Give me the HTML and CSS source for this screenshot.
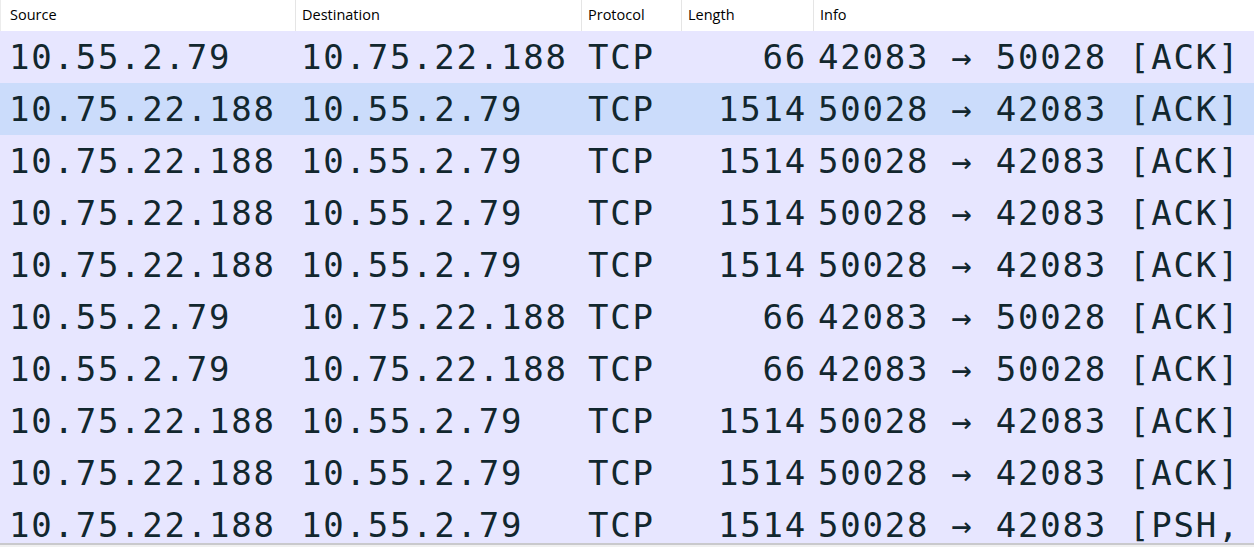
FILE: index.html
```html
<!DOCTYPE html>
<html>
<head>
<meta charset="utf-8">
<link rel="stylesheet" href="styles.css">
</head>
<body>
<div class="pane">
  <div class="head">
    <div class="hcell first">Source</div>
    <div class="hcell">Destination</div>
    <div class="hcell">Protocol</div>
    <div class="hcell">Length</div>
    <div class="hcell">Info</div>
  </div>
  <div class="rows">
    <div class="row"><span class="c src">10.55.2.79</span><span class="c dst">10.75.22.188</span><span class="c proto">TCP</span><span class="c len">66</span><span class="c info">42083 → 50028 [ACK]</span></div>
    <div class="row sel"><span class="c src">10.75.22.188</span><span class="c dst">10.55.2.79</span><span class="c proto">TCP</span><span class="c len">1514</span><span class="c info">50028 → 42083 [ACK]</span></div>
    <div class="row"><span class="c src">10.75.22.188</span><span class="c dst">10.55.2.79</span><span class="c proto">TCP</span><span class="c len">1514</span><span class="c info">50028 → 42083 [ACK]</span></div>
    <div class="row"><span class="c src">10.75.22.188</span><span class="c dst">10.55.2.79</span><span class="c proto">TCP</span><span class="c len">1514</span><span class="c info">50028 → 42083 [ACK]</span></div>
    <div class="row"><span class="c src">10.75.22.188</span><span class="c dst">10.55.2.79</span><span class="c proto">TCP</span><span class="c len">1514</span><span class="c info">50028 → 42083 [ACK]</span></div>
    <div class="row"><span class="c src">10.55.2.79</span><span class="c dst">10.75.22.188</span><span class="c proto">TCP</span><span class="c len">66</span><span class="c info">42083 → 50028 [ACK]</span></div>
    <div class="row"><span class="c src">10.55.2.79</span><span class="c dst">10.75.22.188</span><span class="c proto">TCP</span><span class="c len">66</span><span class="c info">42083 → 50028 [ACK]</span></div>
    <div class="row"><span class="c src">10.75.22.188</span><span class="c dst">10.55.2.79</span><span class="c proto">TCP</span><span class="c len">1514</span><span class="c info">50028 → 42083 [ACK]</span></div>
    <div class="row"><span class="c src">10.75.22.188</span><span class="c dst">10.55.2.79</span><span class="c proto">TCP</span><span class="c len">1514</span><span class="c info">50028 → 42083 [ACK]</span></div>
    <div class="row"><span class="c src">10.75.22.188</span><span class="c dst">10.55.2.79</span><span class="c proto">TCP</span><span class="c len">1514</span><span class="c info">50028 → 42083 [PSH, ACK] Seq=1 Ack=1</span></div>
  </div>
  <div class="foot"></div>
</div>
</body>
</html>
```

FILE: styles.css
```css
html, body {
  margin: 0;
  padding: 0;
  overflow: hidden;
  background: #ffffff;
}

.pane {
  width: 1254px;
  height: 547px;
  display: flex;
  flex-direction: column;
  overflow: hidden;
}

.head {
  display: grid;
  grid-template-columns: 295px 286px 100px 132px 1fr;
  height: 31px;
  flex: none;
  background: #ffffff;
  font-family: "Open Sans", "Noto Sans", sans-serif;
  font-size: 14.5px;
  color: #000000;
}

.hcell {
  border-left: 1px solid #e5e5e5;
  padding-left: 6px;
  display: flex;
  align-items: center;
  padding-bottom: 3px;
  white-space: nowrap;
}

.hcell.first {
  border-left: 1px solid #ececec;
  padding-left: 9px;
}

.rows {
  height: 512px;
  flex: none;
  overflow: hidden;
  background: #e7e6ff;
}

.row {
  display: grid;
  grid-template-columns: 295px 286px 100px 132px 1fr;
  height: 52px;
  align-items: center;
  background: #e7e6ff;
  color: #12272e;
  font-family: "DejaVu Sans Mono", "Liberation Mono", monospace;
  font-size: 34px;
  letter-spacing: 1.75px;
  white-space: nowrap;
}

.row.sel {
  background: #cbdcfb;
}

.c {
  overflow: hidden;
  display: block;
  line-height: 52px;
  padding-bottom: 8px;
}

.src {
  padding-left: 9px;
}

.dst {
  padding-left: 6px;
}

.proto {
  padding-left: 7px;
}

.len {
  text-align: right;
  padding-right: 6px;
}

.info {
  padding-left: 5px;
  overflow: visible;
}

.foot {
  flex: none;
  height: 4px;
  border-top: 2px solid #c9c9cc;
  background: #f0f0f0;
  box-sizing: border-box;
}
```
